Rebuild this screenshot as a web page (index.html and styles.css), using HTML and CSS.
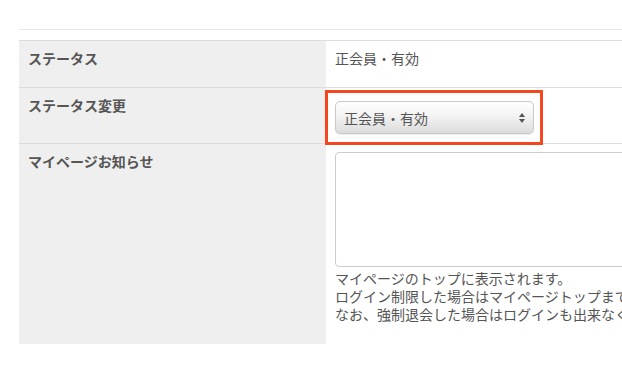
FILE: index.html
```html
<!DOCTYPE html>
<html lang="ja">
<head>
<meta charset="UTF-8">
<title>会員ステータス</title>
<link rel="stylesheet" href="styles.css">
</head>
<body>
<div class="page">
    <div class="section-top"></div>
    <table class="form-table">
        <tr>
            <th>ステータス</th>
            <td>正会員・有効</td>
        </tr>
        <tr>
            <th>ステータス変更</th>
            <td class="select-cell">
                <!-- 赤枠は注記用 -->
                <span class="mark">
                    <span class="select">
                        <span class="select-text">正会員・有効</span>
                        <svg class="select-arrow" width="6" height="10" viewBox="0 0 6 10"><path d="M3 0L6 4H0z M0 6H6L3 10z" fill="#555"/></svg>
                    </span>
                </span>
            </td>
        </tr>
        <tr class="last">
            <th>マイページお知らせ</th>
            <td>
                <textarea class="notice"></textarea>
                <p class="help">マイページのトップに表示されます。<br>ログイン制限した場合はマイページトップまで表示されます。<br>なお、強制退会した場合はログインも出来なくなります。</p>
            </td>
        </tr>
    </table>
</div>
</body>
</html>
```

FILE: styles.css
```css
html,body{margin:0;padding:0;overflow:hidden;}
body{background:#fff;color:#555;font:14px/20px "Noto Sans CJK JP","Noto Sans",sans-serif;}
.page{width:603px;padding-left:19px;overflow:hidden;}
.section-top{width:800px;height:29px;border-bottom:1px solid #e8e8e8;}
.form-table{width:800px;margin-top:10px;border-collapse:collapse;border-top:1px solid #ddd;}
.form-table th,.form-table td{padding:7px 9px 19px;text-align:left;vertical-align:top;border-bottom:1px solid #ddd;white-space:nowrap;}
.form-table th{width:289px;background:#efefef;font-weight:bold;color:#555;}
.form-table tr.last th,.form-table tr.last td{border-bottom:0;padding-bottom:21px;}
.form-table td.select-cell{padding-top:13px;padding-bottom:9px;}
.mark{position:relative;display:inline-block;vertical-align:top;}
.mark::after{content:"";position:absolute;top:-11px;right:-9px;bottom:-11px;left:-10px;border:3px solid #f4471f;}
.select{display:flex;align-items:center;justify-content:space-between;box-sizing:border-box;width:199px;height:33px;padding:0 8px 0 8px;border:1px solid #c9c9c9;border-radius:5px;background:linear-gradient(#fff,#f3f3f3 45%,#dcdcdc);box-shadow:0 1px 1px rgba(0,0,0,.08);}
.select-text{color:#555;}
.select-arrow{display:block;}
.notice{display:block;box-sizing:border-box;width:420px;height:115px;margin:1px 0 0;padding:4px;border:1px solid #ccc;border-radius:4px;resize:none;font:inherit;}
.help{margin:2px 0 0;line-height:18px;color:#555;}
```
